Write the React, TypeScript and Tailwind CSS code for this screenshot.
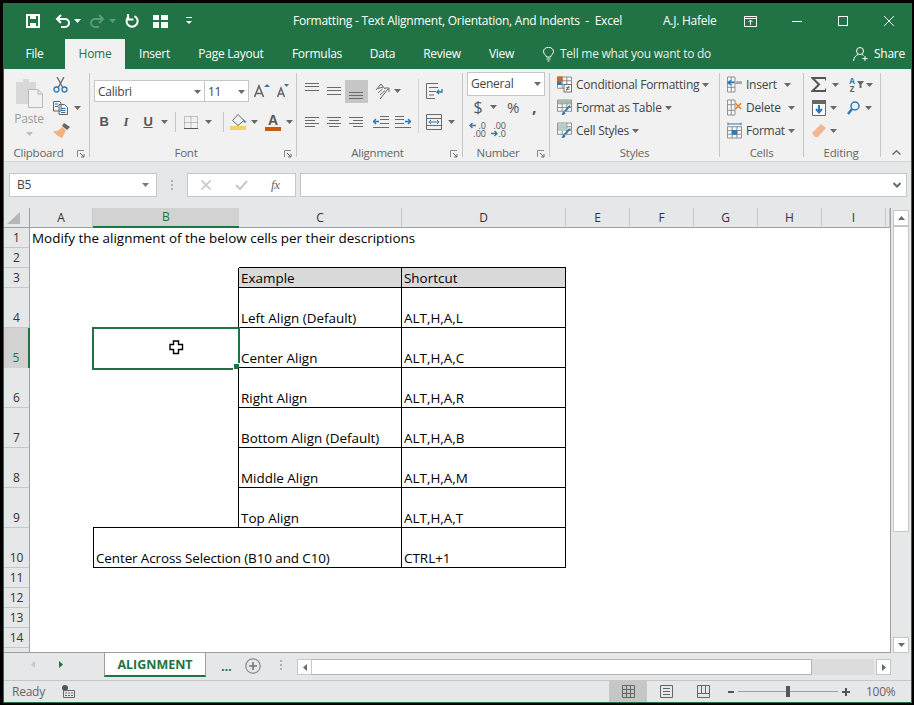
import type { ReactNode } from "react";

const ROWS = [1, 2, 3, 4, 5, 6, 7, 8, 9, 10, 11, 12, 13, 14, 15];
const COLS = ["A", "B", "C", "D", "E", "F", "G", "H", "I", "J"];

const CELL_TEXT: Record<string, string> = {
   A1: "Modify the alignment of the below cells per their descriptions",
   C3: "Example",
   D3: "Shortcut",
   C4: "Left Align (Default)",
   D4: "ALT,H,A,L",
   C5: "Center Align",
   D5: "ALT,H,A,C",
   C6: "Right Align",
   D6: "ALT,H,A,R",
   C7: "Bottom Align (Default)",
   D7: "ALT,H,A,B",
   C8: "Middle Align",
   D8: "ALT,H,A,M",
   C9: "Top Align",
   D9: "ALT,H,A,T",
   B10: "Center Across Selection (B10 and C10)",
   D10: "CTRL+1",
};

const CELL_BORDER: Record<string, string> = {
   C2: "border-b border-black",
   D2: "border-b border-black",
   B3: "border-r border-black",
   B4: "border-r border-black",
   B5: "border-r border-black",
   B6: "border-r border-black",
   B7: "border-r border-black",
   B8: "border-r border-black",
   B9: "border-r border-b border-black",
   C3: "border-r border-b border-black bg-[#d9d9d9]",
   D3: "border-r border-b border-black bg-[#d9d9d9]",
   C4: "border-r border-b border-black",
   D4: "border-r border-b border-black",
   C5: "border-r border-b border-black",
   D5: "border-r border-b border-black",
   C6: "border-r border-b border-black",
   D6: "border-r border-b border-black",
   C7: "border-r border-b border-black",
   D7: "border-r border-b border-black",
   C8: "border-r border-b border-black",
   D8: "border-r border-b border-black",
   C9: "border-r border-b border-black",
   D9: "border-r border-b border-black",
   B10: "col-span-2 border-l border-r border-b border-black tracking-[-0.1px]",
   D10: "border-r border-b border-black",
};

function Caret({ color = "#6a6a6a" }: { color?: string }) {
   return (
      <svg width="7" height="4" viewBox="0 0 7 4" className="shrink-0">
         <path d="M0 0H7L3.5 4Z" fill={color} />
      </svg>
   );
}

function Launcher() {
   return (
      <svg width="8" height="8" viewBox="0 0 8 8" className="justify-self-end mt-[5px]">
         <path d="M0.5 7V0.5H7" fill="none" stroke="#8a8a8a" />
         <path d="M3 3L7 7M7 4V7H4" fill="none" stroke="#6a6a6a" />
      </svg>
   );
}

function Lines({ rows, h = 22 }: { rows: [number, number, number][]; h?: number }) {
   return (
      <svg width="15" height={h} viewBox={`0 0 15 ${h}`} className="shrink-0">
         {rows.map(([y, x, w]) => (
            <rect key={y} x={x} y={y} width={w} height="1" fill="#6a6a6a" />
         ))}
      </svg>
   );
}

function Group({
   width,
   label,
   labelClass,
   launcher,
   children,
}: {
   width: string;
   label: string;
   labelClass?: string;
   launcher?: boolean;
   children: ReactNode;
}) {
   return (
      <div className={`${width} mt-[4px] h-[84px] shrink-0 flex flex-col border-r border-[#c6c6c6]`}>
         <div className="flex-1 min-h-0">{children}</div>
         <div className="h-[12px] pr-[4px] grid grid-cols-[1fr_auto_1fr] items-start text-[11.5px] text-[#666] leading-[16px]">
            <span />
            <span className={labelClass}>{label}</span>
            {launcher ? <Launcher /> : <span />}
         </div>
      </div>
   );
}

function TextRow({ icon, text, textWidth, caret, iconGap }: { icon: ReactNode; text: string; textWidth?: string; caret?: string; iconGap: string }) {
   return (
      <div className="h-[23px] flex items-center ml-[7px] text-[12px] text-[#444]">
         <div className="w-[15px] shrink-0 flex justify-center">{icon}</div>
         <span className={`${iconGap} ${textWidth ?? ""} whitespace-nowrap`}>{text}</span>
         <span className={caret}>
            <Caret />
         </span>
      </div>
   );
}

function TitleBar() {
   return (
      <div className="h-[36px] shrink-0 flex items-center text-white text-[12px]">
         <svg width="14" height="14" viewBox="0 0 14 14" className="ml-[22px] shrink-0">
            <path d="M1 1H13V13H1Z" fill="none" stroke="#fff" strokeWidth="2" />
            <rect x="4" y="1" width="6" height="4" fill="#fff" />
            <rect x="4" y="9" width="6" height="4" fill="#fff" />
         </svg>
         <svg width="15" height="14" viewBox="0 0 15 14" className="ml-[15px] shrink-0">
            <path d="M6 1L2 5L6 9M2 5H10A4 4 0 0 1 10 13H6" fill="none" stroke="#fff" strokeWidth="2" />
         </svg>
         <span className="ml-[4px]">
            <Caret color="#fff" />
         </span>
         <svg width="15" height="14" viewBox="0 0 15 14" className="ml-[9px] shrink-0">
            <path d="M9 1L13 5L9 9M13 5H5A4 4 0 0 0 5 13H9" fill="none" stroke="#5c9c78" strokeWidth="2" />
         </svg>
         <span className="ml-[4px]">
            <Caret color="#5c9c78" />
         </span>
         <svg width="14" height="14" viewBox="0 0 14 14" className="ml-[9px] shrink-0">
            <path d="M9.5 2.2A5.5 5.5 0 1 1 4 2.6" fill="none" stroke="#fff" strokeWidth="2" />
            <path d="M3 0V5.5H8.5" fill="none" stroke="#fff" strokeWidth="2" />
         </svg>
         <svg width="15" height="13" viewBox="0 0 15 13" className="ml-[14px] shrink-0">
            <path d="M0 0H6V5H0ZM8 0H15V5H8ZM0 7H6V13H0ZM8 7H15V13H8Z" fill="#fff" />
         </svg>
         <svg width="6" height="8" viewBox="0 0 6 8" className="ml-[18px] shrink-0">
            <rect y="0" width="6" height="1" fill="#fff" />
            <path d="M0 4H6L3 7Z" fill="#fff" />
         </svg>
         <span className="ml-[101px] w-[370px] whitespace-nowrap">Formatting - Text Alignment, Orientation, And Indents&nbsp;&nbsp;-&nbsp;&nbsp;Excel</span>
         <span className="w-[81px] whitespace-nowrap">A.J. Hafele</span>
         <svg width="13" height="11" viewBox="0 0 13 11" className="shrink-0">
            <path d="M0.5 0.5H12.5V10.5H0.5Z M0.5 2.5H12.5" fill="none" stroke="#fff" />
            <path d="M6.5 9V4M4.5 6L6.5 4L8.5 6" fill="none" stroke="#fff" />
         </svg>
         <div className="ml-[35px] w-[10px] h-px bg-white" />
         <div className="ml-[36px] w-[10px] h-[10px] border border-white" />
         <svg width="10" height="10" viewBox="0 0 10 10" className="ml-[36px] shrink-0">
            <path d="M0 0L10 10M10 0L0 10" stroke="#fff" />
         </svg>
      </div>
   );
}

function TabRow() {
   return (
      <div className="h-[30px] shrink-0 flex items-center text-white text-[12px]">
         <div className="w-[61px] text-center">File</div>
         <div className="w-[60px] h-full bg-[#f1f1f1] text-[#217346] flex items-center justify-center">Home</div>
         <div className="w-[59px] text-center">Insert</div>
         <div className="w-[94px] text-center">Page Layout</div>
         <div className="w-[78px] text-center">Formulas</div>
         <div className="w-[53px] text-center">Data</div>
         <div className="w-[66px] text-center">Review</div>
         <div className="w-[53px] text-center">View</div>
         <svg width="11" height="15" viewBox="0 0 11 15" className="ml-[15px] shrink-0">
            <path d="M3.5 10C3 8 0.5 7 0.5 4.5A5 4.2 0 0 1 10.5 4.5C10.5 7 8 8 7.5 10ZM3.5 12H7.5M4.5 14H6.5" fill="none" stroke="#fff" />
         </svg>
         <span className="ml-[6px] whitespace-nowrap text-[#e6f0ea]">Tell me what you want to do</span>
         <svg width="15" height="16" viewBox="0 0 15 16" className="ml-auto shrink-0">
            <circle cx="7" cy="5" r="3.5" fill="none" stroke="#fff" />
            <path d="M0.5 15C1 11 3 9.5 5 8.5M9 8.5L10.5 9.5M12 10V15M9.5 12.5H14.5" fill="none" stroke="#fff" />
         </svg>
         <span className="ml-[6px] mr-[6px]">Share</span>
      </div>
   );
}

function ClipboardGroup() {
   return (
      <Group width="w-[86px]" label="Clipboard" labelClass="mr-[12px]" launcher>
         <div className="flex">
            <div className="ml-[10px] w-[30px] flex flex-col items-center pt-[5px]">
               <svg width="29" height="30" viewBox="0 0 29 30">
                  <path d="M1 4H8V1H14V4H21V26H1Z" fill="#d8d8d8" />
                  <path d="M13.5 11.5H23L27.5 16V29.5H13.5Z" fill="#f1f1f1" stroke="#b8b8b8" />
                  <path d="M23 11.5V16H27.5" fill="none" stroke="#b8b8b8" />
               </svg>
               <span className="text-[12px] text-[#9c9c9c] leading-[16px] mt-[3px]">Paste</span>
               <span className="mt-[5px]">
                  <Caret color="#bdbdbd" />
               </span>
            </div>
            <div className="ml-[9px] flex flex-col">
               <div className="h-[23px] flex items-center">
                  <svg width="15" height="16" viewBox="0 0 15 16">
                     <path d="M4 0L9.5 10M11 0L5.5 10" stroke="#666" strokeWidth="1.3" fill="none" />
                     <circle cx="3.5" cy="12.5" r="2.5" fill="none" stroke="#2b79b5" strokeWidth="1.3" />
                     <circle cx="11.5" cy="12.5" r="2.5" fill="none" stroke="#2b79b5" strokeWidth="1.3" />
                  </svg>
               </div>
               <div className="h-[23px] flex items-center">
                  <svg width="15" height="14" viewBox="0 0 15 14">
                     <path d="M0.5 0.5H6.5L8 2V10H0.5ZM6 3.5H11.5L14.5 6.5V13.5H6Z" fill="#f1f1f1" stroke="#666" />
                     <path d="M2 3H5M2 5.5H5M8 7.5H12.5M8 9.5H12.5M8 11.5H12.5" stroke="#2b79b5" />
                  </svg>
                  <span className="ml-[6px]">
                     <Caret />
                  </span>
               </div>
               <div className="h-[23px] flex items-center">
                  <svg width="17" height="15" viewBox="0 0 17 15">
                     <path d="M11 0L17 4L14 7L9 3Z" fill="#666" />
                     <path d="M9 4L13 7.5L9 15C6 14 2 11 0 8C3 8.5 6 7.5 9 4Z" fill="#f3b27c" />
                  </svg>
               </div>
            </div>
         </div>
      </Group>
   );
}

function FontGroup() {
   return (
      <Group width="w-[207px]" label="Font" labelClass="mr-[10px]" launcher>
         <div className="pt-[7px]">
            <div className="flex items-center h-[22px]">
               <div className="ml-[4px] w-[111px] h-full bg-white border border-[#c6c6c6] flex items-center justify-between px-[3px] pt-[1px] text-[12px] text-[#444]">
                  Calibri
                  <Caret />
               </div>
               <div className="w-[44px] h-full bg-white border border-l-0 border-[#c6c6c6] flex items-center justify-between px-[3px] pt-[1px] text-[12px] text-[#444]">
                  11
                  <Caret />
               </div>
               <svg width="16" height="14" viewBox="0 0 16 14" className="ml-[5px]">
                  <path d="M0.5 13L5 2L9.5 13M2 9.5H8" fill="none" stroke="#666" strokeWidth="1.6" />
                  <path d="M10 3L13 0L16 3Z" fill="#2b79b5" />
               </svg>
               <svg width="12" height="14" viewBox="0 0 12 14" className="ml-[7px]">
                  <path d="M0.5 13L4 4L7.5 13M1.7 10H6.3" fill="none" stroke="#666" strokeWidth="1.5" />
                  <path d="M7 0H12L9.5 3Z" fill="#2b79b5" />
               </svg>
            </div>
            <div className="flex items-center h-[22px] mt-[9px] ml-[3px] text-[#555]">
               <span className="w-[22px] text-center text-[13px] font-bold font-['Liberation_Sans',sans-serif]">B</span>
               <span className="w-[22px] text-center text-[13px] font-bold italic font-['Liberation_Serif',serif]">I</span>
               <span className="w-[22px] text-center text-[13px] font-bold underline font-['Liberation_Sans',sans-serif]">U</span>
               <span className="ml-[2px] w-[8px]">
                  <Caret />
               </span>
               <div className="w-[12px] flex justify-center">
                  <div className="w-px h-[20px] bg-[#c6c6c6]" />
               </div>
               <svg width="14" height="13" viewBox="0 0 14 13" className="ml-[3px]">
                  <path d="M0.5 0.5H13.5V12.5H0.5ZM7 0.5V12.5M0.5 6.5H13.5" fill="none" stroke="#8a8a8a" strokeDasharray="1 1" />
                  <path d="M0 12.5H14" stroke="#555" />
               </svg>
               <span className="ml-[7px] w-[10px]">
                  <Caret />
               </span>
               <div className="ml-[2px] w-[12px] flex justify-center">
                  <div className="w-px h-[20px] bg-[#c6c6c6]" />
               </div>
               <svg width="17" height="16" viewBox="0 0 17 16" className="ml-[1px]">
                  <path d="M8 0.5L14 6.5L8 11.5L2.5 6.5Z" fill="#f1f1f1" stroke="#666" />
                  <path d="M13 5L16.5 8L14.5 9Z" fill="#2b79b5" />
                  <rect y="12" width="16" height="4" fill="#f7d063" />
               </svg>
               <span className="ml-[4px] w-[10px]">
                  <Caret />
               </span>
               <div className="ml-[4px] w-[16px] flex flex-col items-center">
                  <span className="text-[14px] leading-[13px] font-bold text-[#555] font-['Liberation_Sans',sans-serif]">A</span>
                  <div className="w-[16px] h-[4px] bg-[#c55a11]" />
               </div>
               <span className="ml-[5px]">
                  <Caret />
               </span>
            </div>
         </div>
      </Group>
   );
}

function AlignmentGroup() {
   return (
      <Group width="w-[166px]" label="Alignment" launcher>
         <div className="flex">
            <div className="w-[121px] pt-[7px]">
               <div className="flex items-center h-[22px]">
                  <span className="ml-[8px]">
                     <Lines rows={[[3, 0, 14], [6, 0, 14], [10, 0, 14]]} />
                  </span>
                  <span className="ml-[7px]">
                     <Lines rows={[[7, 0, 14], [10, 0, 14], [14, 0, 14]]} />
                  </span>
                  <div className="ml-[3px] w-[23px] h-[23px] bg-[#c6c6c6] flex justify-center">
                     <Lines rows={[[12, 0, 14], [15, 0, 14], [18, 0, 14]]} />
                  </div>
                  <svg width="17" height="18" viewBox="0 0 17 18" className="ml-[6px]">
                     <path d="M2 8L7 2L11 7M4 6.5L9 5M4 11L8.5 7M6 13L11 8.5" fill="none" stroke="#666" />
                     <path d="M6 17L14 7M11 6H15V10" fill="none" stroke="#666" />
                  </svg>
                  <span className="ml-[3px]">
                     <Caret />
                  </span>
               </div>
               <div className="flex items-center h-[22px] mt-[9px]">
                  <span className="ml-[8px]">
                     <Lines rows={[[6, 0, 14], [9, 0, 10], [12, 0, 14], [15, 0, 10]]} />
                  </span>
                  <span className="ml-[7px]">
                     <Lines rows={[[6, 0, 14], [9, 2, 10], [12, 0, 14], [15, 2, 10]]} />
                  </span>
                  <span className="ml-[7px]">
                     <Lines rows={[[6, 0, 14], [9, 4, 10], [12, 0, 14], [15, 4, 10]]} />
                  </span>
                  <svg width="16" height="12" viewBox="0 0 16 12" className="ml-[9px]">
                     <path d="M7 0.5H16M7 3.5H16M7 7.5H16M0 11.5H16" stroke="#6a6a6a" />
                     <path d="M0 5.5H6M3 3L0.5 5.5L3 8" fill="none" stroke="#2b79b5" strokeWidth="1.4" />
                  </svg>
                  <svg width="16" height="12" viewBox="0 0 16 12" className="ml-[6px]">
                     <path d="M0 0.5H9M0 3.5H9M0 7.5H9M0 11.5H16" stroke="#6a6a6a" />
                     <path d="M10 5.5H16M13 3L15.5 5.5L13 8" fill="none" stroke="#2b79b5" strokeWidth="1.4" />
                  </svg>
               </div>
            </div>
            <div className="mt-[6px] w-px h-[54px] bg-[#d4d4d4]" />
            <div className="ml-[7px] flex flex-col">
               <svg width="17" height="16" viewBox="0 0 17 16" className="mt-[10px]">
                  <path d="M0.5 0.5H12M0.5 0.5V15.5H9M3 4.5H12M3 8.5H10M3 12H8" fill="none" stroke="#6a6a6a" />
                  <path d="M16 6V9H11M13 7L11 9L13 11" fill="none" stroke="#2b79b5" strokeWidth="1.4" />
               </svg>
               <div className="flex items-center mt-[15px]">
                  <svg width="16" height="16" viewBox="0 0 16 16">
                     <path d="M0.5 0.5H15.5V15.5H0.5ZM0.5 4.5H15.5M0.5 11.5H15.5" fill="none" stroke="#6a6a6a" />
                     <path d="M3 8H13M5 6L3 8L5 10M11 6L13 8L11 10" fill="none" stroke="#2b79b5" />
                  </svg>
                  <span className="ml-[6px]">
                     <Caret />
                  </span>
               </div>
            </div>
         </div>
      </Group>
   );
}

function NumberGroup() {
   return (
      <Group width="w-[87px]" label="Number" labelClass="mr-[12px]" launcher>
         <div className="flex flex-col -mt-[1px]">
            <div className="ml-[4px] w-[78px] h-[24px] bg-white border border-[#c6c6c6] flex items-center justify-between px-[3px] text-[12px] text-[#444]">
               General
               <Caret />
            </div>
            <div className="h-[22px] flex items-center text-[#555]">
               <span className="ml-[10px] w-[10px] text-center text-[16px] leading-none">$</span>
               <span className="ml-[7px]">
                  <Caret />
               </span>
               <span className="ml-[7px] w-[18px] text-center text-[15px] leading-none">%</span>
               <span className="ml-[10px] text-[16px] leading-none font-bold">,</span>
            </div>
            <div className="h-[23px] flex items-center text-[9px] leading-[8px] text-[#555] tracking-normal">
               <svg width="7" height="7" viewBox="0 0 7 7" className="ml-[6px] self-start mt-[4px] shrink-0">
                  <path d="M7 3.5H1M3.5 1L1 3.5L3.5 6" fill="none" stroke="#2b79b5" strokeWidth="1.4" />
               </svg>
               <div className="w-[10px] flex flex-col items-end">
                  <span>.0</span>
                  <span>.00</span>
               </div>
               <div className="ml-[8px] w-[12px] flex flex-col items-end">
                  <span>.00</span>
                  <span className="flex items-center">
                     <svg width="7" height="7" viewBox="0 0 7 7" className="shrink-0">
                        <path d="M0 3.5H6M3.5 1L6 3.5L3.5 6" fill="none" stroke="#2b79b5" strokeWidth="1.4" />
                     </svg>
                     .0
                  </span>
               </div>
            </div>
         </div>
      </Group>
   );
}

function GridIcon({ children }: { children?: ReactNode }) {
   return (
      <svg width="16" height="17" viewBox="0 0 16 17">
         <path d="M0.5 0.5H15.5V12.5H0.5ZM5.5 0.5V12.5M10.5 0.5V12.5M0.5 4.5H15.5M0.5 8.5H15.5" fill="#f7f7f7" stroke="#8a8a8a" />
         {children}
      </svg>
   );
}

function StylesGroup() {
   return (
      <Group width="w-[170px]" label="Styles" labelClass="ml-[4px]">
         <TextRow
            iconGap="ml-[4px]"
            caret="ml-[3px]"
            text="Conditional Formatting"
            icon={
               <GridIcon>
                  <rect x="0" y="0" width="6" height="5" fill="#c8692c" />
                  <rect x="0" y="5" width="5" height="4" fill="#2b79b5" />
                  <rect x="7.5" y="8.5" width="8" height="8" fill="#fff" stroke="#666" />
                  <path d="M9.5 11.5H13.5M9.5 13.5H13.5M10 15L13 10" stroke="#444" strokeWidth="0.8" />
               </GridIcon>
            }
         />
         <TextRow
            iconGap="ml-[4px]"
            caret="ml-[3px]"
            text="Format as Table"
            icon={
               <GridIcon>
                  <rect x="1" y="1" width="14" height="3" fill="#9dbdaa" />
                  <path d="M15 7L9 13L7.5 12L13 6ZM7.5 12.5C6 13 5.5 15 5 16.5C7 16.5 9 15.5 9 14Z" fill="#2b79b5" />
               </GridIcon>
            }
         />
         <TextRow
            iconGap="ml-[4px]"
            caret="ml-[3px]"
            text="Cell Styles"
            icon={
               <GridIcon>
                  <rect x="1" y="1" width="9" height="8" fill="#b6d0c4" />
                  <path d="M15 7L9 13L7.5 12L13 6ZM7.5 12.5C6 13 5.5 15 5 16.5C7 16.5 9 15.5 9 14Z" fill="#2b79b5" />
               </GridIcon>
            }
         />
      </Group>
   );
}

function CellsGroup() {
   return (
      <Group width="w-[84px]" label="Cells" labelClass="ml-[4px]">
         <TextRow
            iconGap="ml-[4px]"
            textWidth="w-[29px]"
            caret="ml-[9px]"
            text="Insert"
            icon={
               <svg width="16" height="17" viewBox="0 0 16 17">
                  <path d="M0.5 0.5H8.5V16.5H0.5ZM0.5 5.5H8.5M0.5 11.5H8.5M4.5 0.5V16.5" fill="#f7f7f7" stroke="#8a8a8a" />
                  <path d="M1 6.5H8M4 4L1 6.5L4 9" fill="none" stroke="#2b79b5" strokeWidth="1.5" />
                  <rect x="9" y="5" width="7" height="3" fill="#a8a8a8" />
               </svg>
            }
         />
         <TextRow
            iconGap="ml-[4px]"
            textWidth="w-[29px]"
            caret="ml-[13px]"
            text="Delete"
            icon={
               <svg width="16" height="17" viewBox="0 0 16 17">
                  <path d="M0.5 0.5H8.5V16.5H0.5ZM0.5 5.5H8.5M0.5 11.5H8.5M4.5 0.5V16.5" fill="#f7f7f7" stroke="#8a8a8a" />
                  <path d="M9 4L15 10M15 4L9 10" stroke="#d9822b" strokeWidth="1.6" />
               </svg>
            }
         />
         <TextRow
            iconGap="ml-[4px]"
            caret="ml-[3px]"
            text="Format"
            icon={
               <svg width="16" height="17" viewBox="0 0 16 17">
                  <path d="M0.5 4.5H15.5V16.5H0.5ZM5.5 4.5V16.5M10.5 4.5V16.5M0.5 8.5H15.5M0.5 12.5H15.5" fill="#f7f7f7" stroke="#8a8a8a" />
                  <rect x="5" y="8" width="6" height="5" fill="#2b79b5" />
                  <path d="M1 1.5H15M1 0V3M15 0V3" stroke="#2b79b5" />
               </svg>
            }
         />
      </Group>
   );
}

function EditingGroup() {
   return (
      <Group width="w-[77px]" label="Editing" labelClass="ml-[2px]">
         <div className="h-[23px] flex items-center">
            <svg width="15" height="15" viewBox="0 0 15 15" className="ml-[7px]">
               <path d="M15 3.5V1H1.5L8 7.5L1.5 14H15V11.5" fill="none" stroke="#555" strokeWidth="2" />
            </svg>
            <span className="ml-[6px]">
               <Caret />
            </span>
            <div className="ml-[9px] w-[8px] flex flex-col items-center text-[8px] leading-[8px] font-bold">
               <span className="text-[#2b79b5]">A</span>
               <span className="text-[#666]">Z</span>
            </div>
            <svg width="7" height="7" viewBox="0 0 7 7" className="ml-[1px]">
               <path d="M0 0H7L4.5 3.5V7H2.5V3.5Z" fill="#666" />
            </svg>
            <span className="ml-[2px]">
               <Caret />
            </span>
         </div>
         <div className="h-[23px] flex items-center">
            <svg width="14" height="16" viewBox="0 0 14 16" className="ml-[8px]">
               <rect width="14" height="4" fill="#666" />
               <path d="M0.5 4V15.5H13.5V4" fill="#fff" stroke="#666" />
               <path d="M7 5V12M4 9L7 12.5L10 9" fill="none" stroke="#2b79b5" strokeWidth="2" />
            </svg>
            <span className="ml-[4px]">
               <Caret />
            </span>
            <svg width="13" height="14" viewBox="0 0 13 14" className="ml-[10px]">
               <circle cx="8" cy="5" r="4" fill="none" stroke="#2b79b5" strokeWidth="1.5" />
               <path d="M5 8L1 13" stroke="#2b79b5" strokeWidth="2.4" />
            </svg>
            <span className="ml-[5px]">
               <Caret />
            </span>
         </div>
         <div className="h-[23px] flex items-center">
            <svg width="14" height="13" viewBox="0 0 14 13" className="ml-[8px]">
               <path d="M9 0L14 4L6 13H3L0 9Z" fill="#f0b694" />
            </svg>
            <span className="ml-[4px]">
               <Caret />
            </span>
         </div>
      </Group>
   );
}

function Ribbon() {
   return (
      <div className="h-[93px] shrink-0 bg-[#f1f1f1] border-b border-[#d4d4d4] flex">
         <ClipboardGroup />
         <FontGroup />
         <AlignmentGroup />
         <NumberGroup />
         <StylesGroup />
         <CellsGroup />
         <EditingGroup />
         <div className="flex-1 flex items-end justify-center pb-[6px]">
            <svg width="9" height="5" viewBox="0 0 9 5">
               <path d="M0.5 4.5L4.5 0.8L8.5 4.5" fill="none" stroke="#666" strokeWidth="1.4" />
            </svg>
         </div>
      </div>
   );
}

function FormulaBar() {
   return (
      <div className="h-[46px] shrink-0 bg-[#e6e7e8] flex pt-[11px]">
         <div className="ml-[5px] w-[148px] h-[24px] bg-white border border-[#c6c6c6] flex items-center justify-between pl-[7px] pr-[7px] text-[12px] text-[#444]">
            B5
            <Caret color="#7a7a7a" />
         </div>
         <div className="ml-[14px] w-[2px] h-[24px] flex flex-col justify-center gap-[2px]">
            <div className="h-[2px] bg-[#b0b0b0]" />
            <div className="h-[2px] bg-[#b0b0b0]" />
            <div className="h-[2px] bg-[#b0b0b0]" />
         </div>
         <div className="ml-[14px] w-[109px] h-[24px] bg-white border border-[#c6c6c6] flex items-center text-[#666]">
            <svg width="10" height="10" viewBox="0 0 10 10" className="ml-[13px]">
               <path d="M0.5 0.5L9.5 9.5M9.5 0.5L0.5 9.5" stroke="#c8c8c8" strokeWidth="1.6" />
            </svg>
            <svg width="13" height="10" viewBox="0 0 13 10" className="ml-[24px]">
               <path d="M1 5L5 9L12 1" fill="none" stroke="#c8c8c8" strokeWidth="2" />
            </svg>
            <span className="ml-[23px] text-[13px] italic font-['Liberation_Serif',serif]">fx</span>
         </div>
         <div className="ml-[4px] w-[607px] h-[24px] bg-white border border-[#c6c6c6] flex items-center justify-end pr-[5px]">
            <svg width="8" height="6" viewBox="0 0 8 6">
               <path d="M0.5 1L4 4.5L7.5 1" fill="none" stroke="#6a6a6a" strokeWidth="2" />
            </svg>
         </div>
      </div>
   );
}

function Sheet() {
   return (
      <div className="w-[887px] h-[445px] shrink-0 overflow-hidden border-r border-b border-[#9f9f9f] bg-white text-[13.45px] tracking-normal text-black">
         <div className="grid grid-cols-[26px_63px_146px_163px_164px_64px_64px_64px_64px_64px_4px] grid-rows-[20px_20px_20px_20px_40px_40px_40px_40px_40px_40px_40px_20px_20px_20px_20px_20px]">
            <div className="bg-[#e6e7e8] border-r border-b border-[#9f9f9f] flex items-center justify-center">
               <svg width="13" height="12" viewBox="0 0 13 12" className="ml-[-7px]">
                  <path d="M13 0V12H0Z" fill="#b4b6b8" />
               </svg>
            </div>
            {COLS.map((col) =>
               col === "B" ? (
                  <div key={col} className="bg-[#d2d2d2] border-b-2 border-[#217346] text-[#217346] flex items-center justify-center text-[12px]">
                     {col}
                  </div>
               ) : (
                  <div key={col} className="bg-[#e6e7e8] border-r border-b border-r-[#c6c6c6] border-b-[#9f9f9f] text-[#333] flex items-center justify-center text-[12px]">
                     {col === "J" ? "" : col}
                  </div>
               ),
            )}
            {ROWS.map((row) => (
               <SheetRow key={row} row={row} />
            ))}
         </div>
      </div>
   );
}

function SheetRow({ row }: { row: number }) {
   const selected = row === 5;
   return (
      <>
         <div
            className={
               selected
                  ? "bg-[#d2d2d2] border-r-2 border-[#217346] text-[#217346] flex items-end justify-center pb-[1px] text-[12px] leading-[18px]"
                  : "bg-[#e6e7e8] border-r border-b border-r-[#9f9f9f] border-b-[#c6c6c6] text-[#333] flex items-end justify-center text-[12px] leading-[18px]"
            }
         >
            {/* row 15 is scrolled past the bottom edge, only its header strip shows */}
            {row === 15 ? "" : row}
         </div>
         {COLS.map((col) => {
            const key = `${col}${row}`;
            if (key === "C10") return null;
            const text = CELL_TEXT[key];
            const border = CELL_BORDER[key] ?? "";
            const leading = border.includes("border-b") ? "leading-[18px]" : "leading-[20px]";
            return (
               <div key={key} className={`relative flex items-end pl-[2px] whitespace-nowrap ${leading} ${border}`}>
                  {text}
                  {key === "B5" && <Selection />}
               </div>
            );
         })}
      </>
   );
}

function Selection() {
   return (
      <div className="absolute -left-[1px] -top-[1px] w-[148px] h-[43px] border-2 border-[#217346] flex items-center justify-center">
         <svg width="15" height="15" viewBox="0 0 15 15" className="ml-[20px] -mt-[2px]">
            <path d="M4.5 1H9.5V4.5H13.5V9.5H9.5V13.5H4.5V9.5H1V4.5H4.5Z" fill="#fff" stroke="#000" strokeWidth="1.4" />
         </svg>
         <div className="absolute -right-[2px] -bottom-[2px] w-[5px] h-[5px] bg-[#217346] border border-white box-content" />
      </div>
   );
}

function ScrollBar() {
   return (
      <div className="ml-[2px] mt-[2px] w-[16px] h-[443px] flex flex-col">
         <div className="h-[16px] bg-white border border-[#c6c6c6] flex items-center justify-center">
            <svg width="7" height="4" viewBox="0 0 7 4">
               <path d="M0 4H7L3.5 0Z" fill="#6a6a6a" />
            </svg>
         </div>
         <div className="h-[306px] bg-white border border-[#c6c6c6]" />
         <div className="flex-1" />
         <div className="h-[16px] bg-white border border-[#c6c6c6] flex items-center justify-center">
            <Caret />
         </div>
      </div>
   );
}

function SheetTabs() {
   return (
      <div className="h-[27px] shrink-0 flex items-start bg-[#e6e7e8]">
         <div className="w-[100px] h-[22px] flex items-center">
            <svg width="4" height="7" viewBox="0 0 4 7" className="ml-[27px]">
               <path d="M4 0V7L0 3.5Z" fill="#c6c6c6" />
            </svg>
            <svg width="4" height="7" viewBox="0 0 4 7" className="ml-[24px]">
               <path d="M0 0V7L4 3.5Z" fill="#217346" />
            </svg>
         </div>
         <div className="w-[102px] h-[24px] bg-white border-x border-[#9f9f9f] border-b-2 border-b-[#217346] text-center text-[12.5px] tracking-normal font-bold text-[#217346] leading-[24px]">
            ALIGNMENT
         </div>
         <span className="ml-[15px] text-[13px] font-bold leading-[26px] text-[#217346]">...</span>
         <svg width="16" height="16" viewBox="0 0 16 16" className="ml-[14px] mt-[5px]">
            <circle cx="8" cy="8" r="7.2" fill="none" stroke="#8a8a8a" strokeWidth="1.2" />
            <path d="M8 4V12M4 8H12" stroke="#777" strokeWidth="1.6" />
         </svg>
         <div className="ml-[19px] mt-[7px] w-[2px] flex flex-col gap-[2px]">
            <div className="h-[2px] bg-[#b0b0b0]" />
            <div className="h-[2px] bg-[#b0b0b0]" />
            <div className="h-[2px] bg-[#b0b0b0]" />
         </div>
         <div className="ml-[15px] mt-[6px] flex w-[594px] h-[16px]">
            <div className="w-[15px] bg-white border border-[#c6c6c6] flex items-center justify-center">
               <svg width="4" height="7" viewBox="0 0 4 7">
                  <path d="M4 0V7L0 3.5Z" fill="#6a6a6a" />
               </svg>
            </div>
            <div className="w-[500px] bg-white border border-l-0 border-[#b4b4b4]" />
            <div className="flex-1 bg-[#dcdcdc]" />
            <div className="ml-[2px] w-[15px] bg-white border border-[#c6c6c6] flex items-center justify-center">
               <svg width="4" height="7" viewBox="0 0 4 7">
                  <path d="M0 0V7L4 3.5Z" fill="#6a6a6a" />
               </svg>
            </div>
         </div>
      </div>
   );
}

function StatusBar() {
   return (
      <div className="h-[22px] shrink-0 bg-[#e6e7e8] border-t border-[#c6c6c6] flex items-center text-[12px] text-[#666]">
         <span className="ml-[8px] w-[50px]">Ready</span>
         <svg width="13" height="13" viewBox="0 0 13 13">
            <circle cx="3" cy="3" r="3" fill="#555" />
            <path d="M1.5 5.5H12.5V12.5H1.5Z" fill="none" stroke="#666" />
            <path d="M3 8H11M3 10.5H11" fill="none" stroke="#666" strokeDasharray="2 1" />
         </svg>
         <div className="ml-[534px] w-[38px] h-full bg-[#c6c6c6] flex items-center justify-center">
            <svg width="13" height="13" viewBox="0 0 13 13">
               <path d="M0.5 0.5H12.5V12.5H0.5ZM4.5 0.5V12.5M8.5 0.5V12.5M0.5 4.5H12.5M0.5 8.5H12.5" fill="none" stroke="#666" />
            </svg>
         </div>
         <svg width="13" height="13" viewBox="0 0 13 13" className="ml-[13px]">
            <path d="M0.5 0.5H12.5V12.5H0.5Z" fill="none" stroke="#666" />
            <path d="M3 3.5H10M3 6.5H10M3 9.5H10" stroke="#666" />
         </svg>
         <svg width="13" height="13" viewBox="0 0 13 13" className="ml-[24px]">
            <path d="M0.5 0.5H12.5V12.5H0.5ZM0.5 8.5H12.5M4.5 0.5V8.5M8.5 0.5V8.5" fill="none" stroke="#666" />
         </svg>
         <div className="ml-[18px] w-[6px] h-[2px] bg-[#555]" />
         <div className="ml-[4px] w-[100px] h-px bg-[#9f9f9f] relative">
            <div className="absolute left-[48px] -top-[5px] w-[4px] h-[11px] bg-[#555]" />
         </div>
         <svg width="8" height="8" viewBox="0 0 8 8" className="ml-[4px]">
            <path d="M4 0V8M0 4H8" stroke="#555" strokeWidth="2" />
         </svg>
         <span className="ml-[16px]">100%</span>
      </div>
   );
}

export default function App() {
   return (
      <div className="w-[914px] h-[705px] bg-black pt-[3px] pl-[3px] pr-[2px] pb-[2px] font-['Open_Sans',sans-serif] tracking-[-0.25px]">
         <div className="h-[700px] bg-[#217346] border-x border-b border-[#217346] flex flex-col">
            <TitleBar />
            <TabRow />
            <Ribbon />
            <FormulaBar />
            <div className="h-[445px] shrink-0 flex bg-[#e6e7e8]">
               <Sheet />
               <ScrollBar />
            </div>
            <SheetTabs />
            <StatusBar />
         </div>
      </div>
   );
}
